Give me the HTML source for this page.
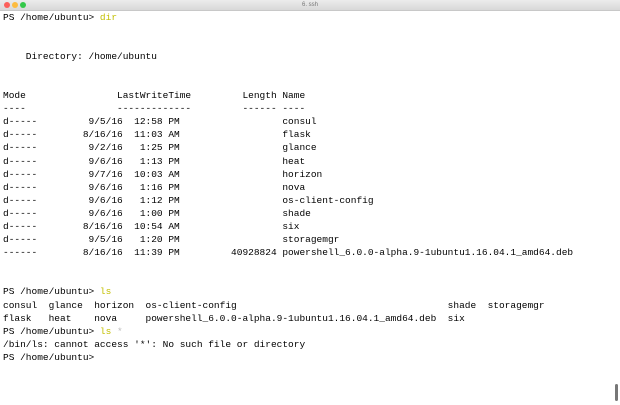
<html><head><style>
body{margin:0;width:620px;height:405px;background:#fff;overflow:hidden;position:relative}
.tb{position:absolute;left:0;top:0;width:620px;height:10px;background:linear-gradient(#ececec,#d8d8d8);border-bottom:1px solid #c8c8c8}
.d{position:absolute;top:2px;width:6px;height:6px;border-radius:50%}
.t{position:absolute;top:0;left:0;width:620px;text-align:center;font:6px "Liberation Sans",sans-serif;color:#777;line-height:10px}
pre{position:absolute;left:3px;top:10.5px;margin:0;font:9.5px/13.1px "Liberation Mono",monospace;color:#000}
.y{color:#c2bf00}.g{color:#bbb}
.sb{position:absolute;left:615px;top:384px;width:3px;height:17px;border-radius:2px;background:#777}
</style></head><body>
<div class="tb"><div class="d" style="left:4px;background:#fc605b"></div><div class="d" style="left:12px;background:#fdbc40"></div><div class="d" style="left:20px;background:#34c84a"></div><div class="t">6. ssh</div></div>
<pre>PS /home/ubuntu&gt; <span class="y">dir</span>


    Directory: /home/ubuntu


Mode                LastWriteTime         Length Name
----                -------------         ------ ----
d-----         9/5/16  12:58 PM                  consul
d-----        8/16/16  11:03 AM                  flask
d-----         9/2/16   1:25 PM                  glance
d-----         9/6/16   1:13 PM                  heat
d-----         9/7/16  10:03 AM                  horizon
d-----         9/6/16   1:16 PM                  nova
d-----         9/6/16   1:12 PM                  os-client-config
d-----         9/6/16   1:00 PM                  shade
d-----        8/16/16  10:54 AM                  six
d-----         9/5/16   1:20 PM                  storagemgr
------        8/16/16  11:39 PM         40928824 powershell_6.0.0-alpha.9-1ubuntu1.16.04.1_amd64.deb


PS /home/ubuntu&gt; <span class="y">ls</span>
consul  glance  horizon  os-client-config                                     shade  storagemgr
flask   heat    nova     powershell_6.0.0-alpha.9-1ubuntu1.16.04.1_amd64.deb  six
PS /home/ubuntu&gt; <span class="y">ls</span> <span class="g">*</span>
/bin/ls: cannot access '*': No such file or directory
PS /home/ubuntu&gt;</pre>
<div class="sb"></div>
</body></html>
